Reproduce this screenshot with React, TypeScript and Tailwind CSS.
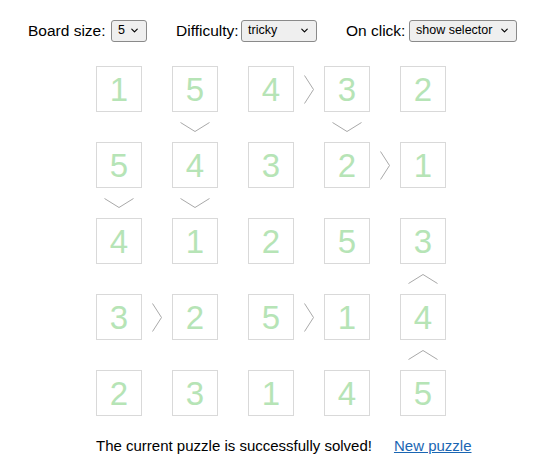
import { ChevronDown } from 'lucide-react';

const board = [
  [1, 5, 4, 3, 2],
  [5, 4, 3, 2, 1],
  [4, 1, 2, 5, 3],
  [3, 2, 5, 1, 4],
  [2, 3, 1, 4, 5],
];

// horizontal signs: key "row-col" means between col and col+1
const hSigns: Record<string, '>' | '<'> = {
  '0-2': '>',
  '1-3': '>',
  '3-0': '>',
  '3-2': '>',
};

// vertical signs: key "row-col" means between row and row+1
const vSigns: Record<string, 'v' | '^'> = {
  '0-1': 'v',
  '0-3': 'v',
  '1-0': 'v',
  '1-1': 'v',
  '2-4': '^',
  '3-4': '^',
};

function HSign({ dir }: { dir: '>' | '<' }) {
  const pts = dir === '>' ? '0.5,0.5 9.5,14.5 0.5,28.5' : '9.5,0.5 0.5,14.5 9.5,28.5';
  return (
    <svg width="10" height="29" viewBox="0 0 10 29">
      <polyline points={pts} fill="none" stroke="#a9a9a9" strokeWidth="1" />
    </svg>
  );
}

function VSign({ dir }: { dir: 'v' | '^' }) {
  const pts = dir === 'v' ? '0.5,0.5 15,9.5 29.5,0.5' : '0.5,9.5 15,0.5 29.5,9.5';
  return (
    <svg width="30" height="10" viewBox="0 0 30 10">
      <polyline points={pts} fill="none" stroke="#a9a9a9" strokeWidth="1" />
    </svg>
  );
}

function FakeSelect({ value, width }: { value: string; width: string }) {
  return (
    <div
      className={`${width} h-[22px] flex items-center justify-between pl-[6px] pr-[6px] border border-[#8a8a8a] rounded-[3px] bg-[#efefef] text-[12.5px] text-black`}
    >
      <span>{value}</span>
      <ChevronDown className="w-[11px] h-[11px]" strokeWidth={2.5} />
    </div>
  );
}

export default function App() {
  const items = [];
  for (let r = 0; r < 9; r++) {
    for (let c = 0; c < 9; c++) {
      const key = `${r}-${c}`;
      const br = Math.floor(r / 2);
      const bc = Math.floor(c / 2);
      if (r % 2 === 0 && c % 2 === 0) {
        items.push(
          <div
            key={key}
            className="border border-[#d9d9d9] flex items-center justify-center text-[33px] text-[#b6e4b6]"
          >
            {board[br][bc]}
          </div>
        );
      } else if (r % 2 === 0) {
        const s = hSigns[`${br}-${bc}`];
        items.push(
          <div key={key} className="flex items-center justify-center">
            {s && <HSign dir={s} />}
          </div>
        );
      } else if (c % 2 === 0) {
        const s = vSigns[`${br}-${bc}`];
        items.push(
          <div key={key} className="flex items-center justify-center">
            {s && <VSign dir={s} />}
          </div>
        );
      } else {
        items.push(<div key={key} />);
      }
    }
  }

  return (
    <div className="w-[540px] h-[466px] bg-white font-['Liberation_Sans',Arial,sans-serif] text-black">
      <div className="flex items-center gap-[29px] pl-[28px] pt-[19px] text-[15.5px]">
        <div className="w-[119px] flex items-center justify-between">
          <span>Board size:</span>
          <FakeSelect value="5" width="w-[36px]" />
        </div>
        <div className="w-[141px] flex items-center justify-between">
          <span>Difficulty:</span>
          <FakeSelect value="tricky" width="w-[76px]" />
        </div>
        <div className="w-[171px] flex items-center justify-between">
          <span>On click:</span>
          <FakeSelect value="show selector" width="w-[108px]" />
        </div>
      </div>

      <div className="w-[350px] ml-[96px] mt-[24px]">
        <div className="grid grid-cols-[46px_30px_46px_30px_46px_30px_46px_30px_46px] grid-rows-[46px_30px_46px_30px_46px_30px_46px_30px_46px]">
          {items}
        </div>
        <div className="mt-[19px] flex items-center gap-[22px] text-[15px] whitespace-nowrap">
          <span>The current puzzle is successfully solved!</span>
          <a href="#" className="text-[#1a66b3] underline">
            New puzzle
          </a>
        </div>
      </div>
    </div>
  );
}
